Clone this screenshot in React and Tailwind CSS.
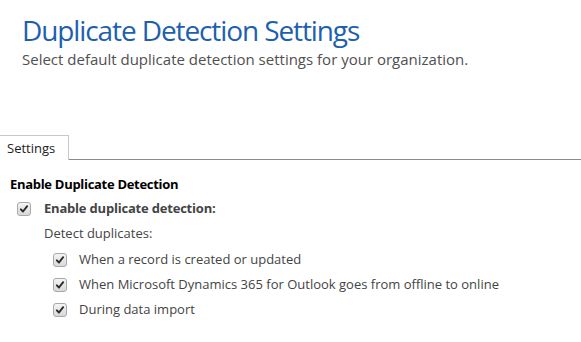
import React from 'react';

function Check() {
  return (
    <span className="flex h-[14px] w-[14px] shrink-0 items-center justify-center rounded-[3px] border border-[#a9a9a9] bg-gradient-to-b from-[#f4f4f4] to-[#d8d8d8]">
      <svg viewBox="0 0 12 12" className="h-[10px] w-[10px]">
        <path d="M2.2 6.4 L4.8 9 L9.8 2.6" fill="none" stroke="#2a2a2a" strokeWidth="2.3" strokeLinecap="round" strokeLinejoin="round" />
      </svg>
    </span>
  );
}

function Option({ label }) {
  return (
    <div className="flex h-[25px] items-center gap-[12px]">
      <Check />
      <span>{label}</span>
    </div>
  );
}

export default function App() {
  return (
    <div className="h-[342px] w-[581px] overflow-hidden bg-white text-[#444]" style={{ fontFamily: '"Open Sans", "Noto Sans", sans-serif' }}>
      <div className="px-[22px] pt-[11px]">
        <h1 className="text-[28px] leading-[38px] tracking-[-1.1px] text-[#1e5fb0]">Duplicate Detection Settings</h1>
        <p className="text-[15px] leading-[20px] text-[#505050]">Select default duplicate detection settings for your organization.</p>
      </div>

      <div className="mt-[66px] flex items-end">
        <div className="border-r border-t border-[#c8c8c8] pb-[3px] pl-[7px] pr-[13px] pt-[4px] text-[13px] leading-[17px] text-[#222]">Settings</div>
        <div className="flex-1 border-b border-[#8a8a8a]"></div>
      </div>

      <div className="px-[10px] pt-[16px] text-[13px]">
        <div className="font-bold leading-[16px] tracking-[-0.3px] text-black">Enable Duplicate Detection</div>
        <div className="ml-[7px] mt-[4px] flex h-[25px] items-center gap-[13px]">
          <Check />
          <span className="font-bold tracking-[-0.2px]">Enable duplicate detection:</span>
        </div>
        <div className="ml-[34px] leading-[25px]">Detect duplicates:</div>
        <div className="ml-[43px] mt-[1px]">
          <Option label="When a record is created or updated" />
          <Option label="When Microsoft Dynamics 365 for Outlook goes from offline to online" />
          <Option label="During data import" />
        </div>
      </div>
    </div>
  );
}
